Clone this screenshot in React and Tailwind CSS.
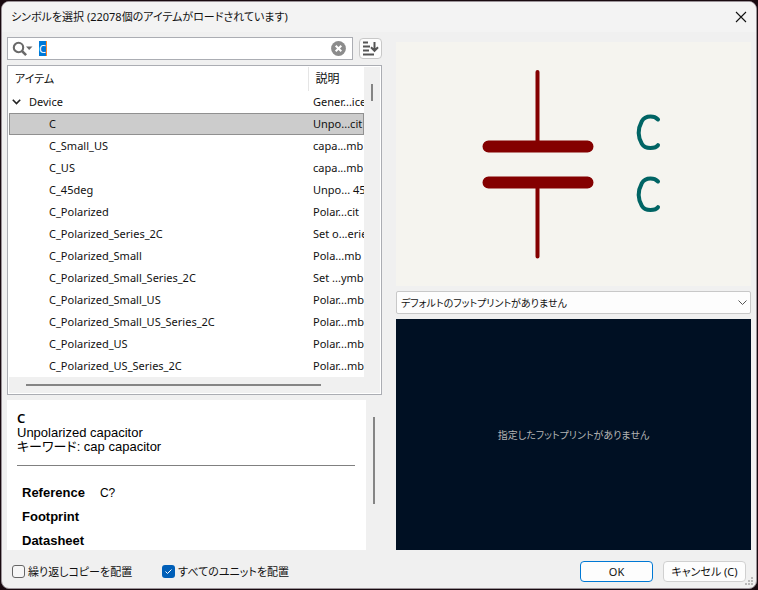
import { useEffect, useRef } from "react";

const rows = [
  ["C", "Unpo...cit"],
  ["C_Small_US", "capa...mb"],
  ["C_US", "capa...mb"],
  ["C_45deg", "Unpo... 45"],
  ["C_Polarized", "Polar...cit"],
  ["C_Polarized_Series_2C", "Set o...erie"],
  ["C_Polarized_Small", "Pola...mb"],
  ["C_Polarized_Small_Series_2C", "Set ...ymb"],
  ["C_Polarized_Small_US", "Polar...mb"],
  ["C_Polarized_Small_US_Series_2C", "Polar...mb"],
  ["C_Polarized_US", "Polar...mb"],
  ["C_Polarized_US_Series_2C", "Polar...mb"],
];

function TitleBar() {
  return (
    <header className="flex h-[30px] shrink-0 items-center justify-between bg-[#f3f3f3] pr-[9px] pl-[9px]">
      <h1>シンボルを選択 (22078個のアイテムがロードされています)</h1>
      <button type="button" aria-label="閉じる" className="size-3">
        <svg viewBox="0 0 12 12" className="size-3" stroke="#111" strokeWidth="1.1" fill="none">
          <path d="M1 1 11 11M11 1 1 11" />
        </svg>
      </button>
    </header>
  );
}

function SearchBar() {
  const ref = useRef(null);
  useEffect(() => {
    ref.current.focus();
    ref.current.select();
  }, []);
  return (
    <div className="flex items-center gap-[6px]">
      <div className="flex h-[23px] min-w-0 flex-1 items-center border border-[#abadb3] bg-white pr-[6px] pl-1">
        <button type="button" aria-label="検索オプション" className="mr-[6px] h-4 w-[21px] shrink-0">
          <svg viewBox="0 0 21 16" className="h-4 w-[21px]" fill="none">
            <circle cx="6.500" cy="6.500" r="4.700" stroke="#6a6a6a" strokeWidth="2.100" />
            <path d="m9.800 9.800 4.300 4.300" stroke="#6a6a6a" strokeWidth="2.600" />
            <path d="M14 5.500h6.500L17.200 9z" fill="#6a6a6a" />
          </svg>
        </button>
        <div className="relative flex min-w-0 flex-1">
          <input
            ref={ref}
            type="text"
            aria-label="シンボルを検索"
            defaultValue="C"
            className="h-[15px] w-full min-w-0 leading-[15px] outline-none selection:bg-[#0078d7] selection:text-white"
          />
          <span className="absolute top-0 left-[7px] h-[15px] w-px bg-[#ff8728]" />
        </div>
        <button type="button" aria-label="クリア" className="size-[15px] shrink-0">
          <svg viewBox="0 0 15 15" className="size-[15px]">
            <circle cx="7.500" cy="7.500" r="7.400" fill="#8c8c8c" />
            <path d="m4.700 4.700 5.600 5.600m0-5.600-5.600 5.600" stroke="#fff" strokeWidth="2" />
          </svg>
        </button>
      </div>
      <button
        type="button"
        aria-label="並べ替え"
        className="flex h-[21px] w-[23px] shrink-0 items-center justify-center rounded border border-[#c8c8c8] bg-[#fdfdfd]"
      >
        <svg viewBox="0 0 17 15" className="h-[15px] w-[17px]" stroke="#545454" strokeWidth="1.800" fill="none">
          <path d="M1 1.500h5M1 5.500h7M1 9.500h6M1 13.500h11" />
          <path d="M12.500 1v8.500M9 6.300l3.500 3.500L16 6.300" strokeWidth="2" />
        </svg>
      </button>
    </div>
  );
}

function SymbolTree() {
  return (
    <div className="flex min-h-0 flex-1 border border-[#abadb3] bg-white p-px">
      <div className="flex min-w-0 flex-1 flex-col">
        <div className="min-h-0 flex-1 overflow-hidden">
          <table className="w-full table-fixed border-collapse text-left">
            <thead>
              <tr className="h-6">
                <th className="w-[299px] border-r border-[#e5e5e5] p-0 pl-[6px] font-normal">アイテム</th>
                <th className="p-0 pl-[7px] text-[12px] font-normal">説明</th>
              </tr>
            </thead>
            <tbody>
              <tr className="h-[22px]">
                <td className="p-0 pl-[3px]">
                  <button type="button" className="flex items-center gap-2">
                    <svg viewBox="0 0 9 6" className="h-[6px] w-[9px]" stroke="#222" strokeWidth="1.600" fill="none">
                      <path d="m.8.8 3.700 3.800L8.200.8" />
                    </svg>
                    Device
                  </button>
                </td>
                <td className="overflow-hidden p-0 pl-[5px] whitespace-nowrap">Gener...ice</td>
              </tr>
              {rows.map(([name, desc], i) => (
                <tr
                  key={name}
                  className={
                    i === 0 ? "h-[22px] bg-[#cccccc] outline outline-[#909090] -outline-offset-1" : "h-[22px]"
                  }
                >
                  <td className="p-0 pl-10">{name}</td>
                  <td className="overflow-hidden p-0 pl-[5px] whitespace-nowrap">{desc}</td>
                </tr>
              ))}
            </tbody>
          </table>
        </div>
        <div className="flex h-4 shrink-0 items-center bg-[#f0f0f0] pr-[43px] pl-[17px]">
          <div className="h-[2px] w-full bg-[#858585]" />
        </div>
      </div>
      <div className="flex w-4 shrink-0 justify-center bg-[#f0f0f0] pt-[17px]">
        <div className="h-[17px] w-[2px] bg-[#858585]" />
      </div>
    </div>
  );
}

function Details() {
  return (
    <div className="flex h-[150px] shrink-0 overflow-hidden font-['Liberation_Sans','Noto_Sans_CJK_JP',sans-serif] text-[13px] text-black">
      <div className="min-w-0 flex-1 bg-white pt-[10px] pr-[11px] pl-[10px]">
        <h2 className="font-['Noto_Sans',sans-serif] leading-4 font-semibold">C</h2>
        <p className="leading-[14px]">Unpolarized capacitor</p>
        <p className="leading-[14px]">キーワード: cap capacitor</p>
        <hr className="mt-[11px] border-[#808080]" />
        <table className="mt-[15px] ml-[5px] text-left">
          <tbody>
            <tr className="h-6">
              <th className="p-0 pr-[15px]">Reference</th>
              <td className="p-0 text-[12px]">C?</td>
            </tr>
            <tr className="h-6">
              <th className="p-0">Footprint</th>
              <td />
            </tr>
            <tr className="h-6">
              <th className="p-0">Datasheet</th>
              <td />
            </tr>
          </tbody>
        </table>
      </div>
      <div className="flex w-4 shrink-0 justify-center pt-[17px]">
        <div className="h-[87px] w-[2px] bg-[#858585]" />
      </div>
    </div>
  );
}

function SymbolPreview() {
  return (
    <div className="min-h-0 flex-1 bg-[#f5f4ef]">
      <svg viewBox="396 42 355 244" className="size-full" fill="none" strokeLinecap="round" strokeLinejoin="round">
        <g stroke="#840000">
          <path d="M537.500 72v74M537.500 182v74.500" strokeWidth="4" />
          <path d="M488.500 146.500h99M488.500 182.500h99" strokeWidth="12" />
        </g>
        <g stroke="#006464" strokeWidth="4">
          <path d="M658 119.500c-2-2-4.500-2.900-7.500-2.900-4 0-7 1.600-8.700 4.600-4 7.500-4 15.500 0 22.500 1.700 3 4.500 4.200 8.700 4.200 3.500 0 6-.7 7.500-2.700" />
          <path d="M658 181.500c-2-2-4.500-2.900-7.500-2.900-4 0-7 1.600-8.700 4.600-4 7.500-4 15.500 0 22.500 1.700 3 4.500 4.200 8.700 4.200 3.500 0 6-.7 7.500-2.700" />
        </g>
      </svg>
    </div>
  );
}

function FootprintSelect() {
  return (
    <div className="relative flex h-[23px] shrink-0">
      <select
        aria-label="フットプリント"
        className="w-full appearance-none rounded-xs border border-[#c8c8c8] bg-[#fdfdfd] pr-6 pl-1 text-[10px]"
      >
        <option>デフォルトのフットプリントがありません</option>
      </select>
      <svg
        viewBox="0 0 9 5"
        className="pointer-events-none absolute top-[9px] right-[4px] h-[5px] w-[9px]"
        stroke="#555"
        fill="none"
      >
        <path d="m.5.5 4 4 4-4" />
      </svg>
    </div>
  );
}

function Footer() {
  return (
    <footer className="flex h-[38px] shrink-0 items-center px-[10px] pt-[5px]">
      <label className="mr-[30px] flex items-center gap-[3px]">
        <input type="checkbox" className="size-[13px] appearance-none rounded-[3px] border border-[#666] bg-[#f6f6f6]" />
        繰り返しコピーを配置
      </label>
      <label className="flex items-center gap-[3px]">
        <span className="relative flex">
          <input type="checkbox" defaultChecked className="size-[13px] appearance-none rounded-[3px] bg-[#005fb8]" />
          <svg viewBox="0 0 13 13" className="pointer-events-none absolute inset-0 size-[13px]" stroke="#fff" fill="none">
            <path d="m3.500 6.500 2 2 4-4" />
          </svg>
        </span>
        すべてのユニットを配置
      </label>
      <div className="ml-auto flex gap-[10px]">
        <button type="button" className="h-[21px] w-[73px] rounded border border-[#0078d4] bg-[#fdfdfd]">
          OK
        </button>
        <button type="button" className="h-[21px] w-[83px] rounded border border-[#d0d0d0] bg-[#fdfdfd]">
          キャンセル (C)
        </button>
      </div>
    </footer>
  );
}

export default function App() {
  return (
    <div className="h-screen bg-[#190a10] p-px font-['Noto_Sans','Noto_Sans_CJK_JP',sans-serif] text-[11px] leading-4 text-[#111] [font-feature-settings:'palt']">
      <div className="relative flex h-full flex-col overflow-hidden rounded-lg border border-[#9a9298] bg-[#f0f0f0]">
        <TitleBar />
        <main className="flex min-h-0 flex-1 gap-[14px] px-[5px]">
          <section className="flex min-w-0 flex-[375] flex-col gap-[5px] pt-[5px]">
            <SearchBar />
            <SymbolTree />
            <Details />
          </section>
          <section className="flex min-w-0 flex-[355] flex-col gap-[5px] pt-[10px]">
            <SymbolPreview />
            <FootprintSelect />
            <div className="flex h-[231px] shrink-0 items-center justify-center bg-[#001023] text-[10px] text-[#b4b4b4]">
              指定したフットプリントがありません
            </div>
          </section>
        </main>
        <Footer />
        <svg viewBox="0 0 9 9" className="absolute right-[2px] bottom-[2px] size-[9px]" fill="#b9b9b9">
          <path d="M6 0h2v2H6zM3 3h2v2H3zM6 3h2v2H6zM0 6h2v2H0zM3 6h2v2H3zM6 6h2v2H6z" />
        </svg>
      </div>
    </div>
  );
}
